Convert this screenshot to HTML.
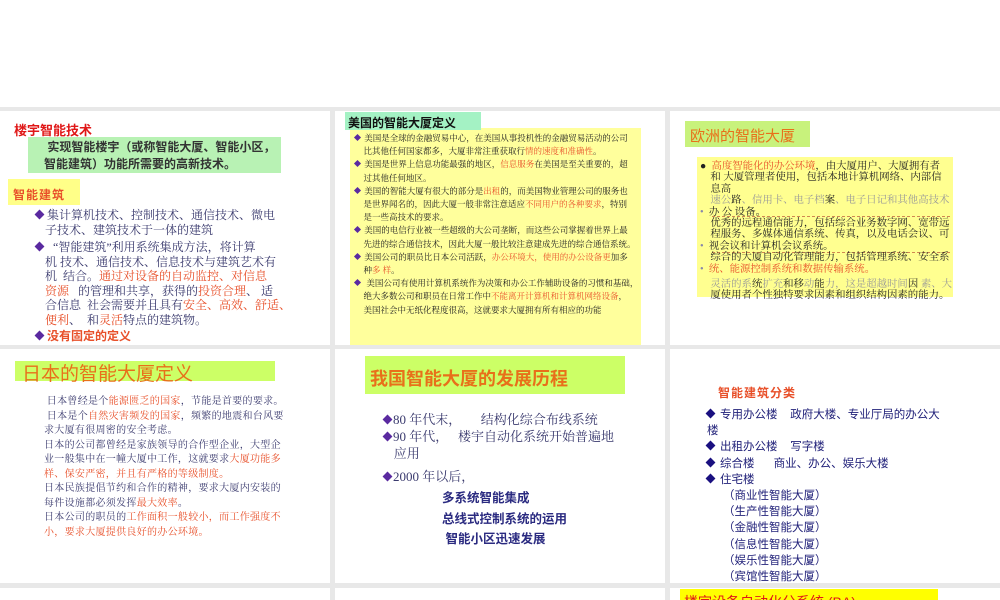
<!DOCTYPE html>
<html><head><meta charset="utf-8">
<style>
*{margin:0;padding:0;box-sizing:border-box}
body{width:1000px;height:600px;background:#e8e8e8;position:relative;overflow:hidden;font-family:"Liberation Sans","Noto Sans CJK SC",sans-serif}
.a{position:absolute}
.s{position:absolute;background:#fff}
.r{color:#e8502a}
.sr{font-family:"Liberation Serif","Noto Serif CJK SC",serif}
.nv{color:#3a3a6e}
.dm{display:inline-block;width:7px;height:7px;background:#5a2aa0;transform:rotate(45deg);margin-right:4px;vertical-align:1px}
.dm2{display:inline-block;width:7px;height:7px;background:#1a1080;transform:rotate(45deg);margin-right:6px;vertical-align:1px}
.dm3{display:inline-block;width:5px;height:5px;background:#5a2aa0;transform:rotate(45deg);vertical-align:1px}
</style></head><body>
<div class="s" style="left:0;top:0;width:1000px;height:107px"></div>

<!-- slide 1 -->
<div class="s" style="left:0;top:111px;width:330px;height:234px"></div>
<div class="a" style="left:14px;top:120px;font-size:13px;font-weight:bold;color:#e01818">楼宇智能技术</div>
<div class="a" style="left:28px;top:137px;width:253px;height:36px;background:#b8f2b4"></div>
<div class="a" style="left:44px;top:139px;font-size:12px;font-weight:bold;color:#333;line-height:17px">&nbsp;实现智能楼宇（或称智能大厦、智能小区，<br>智能建筑）功能所需要的高新技术。</div>
<div class="a" style="left:8px;top:179px;width:72px;height:26px;background:#ffff88"></div>
<div class="a" style="left:13px;top:186px;font-size:12px;font-weight:bold;color:#e8502a;letter-spacing:1px">智能建筑</div>
<div class="a sr nv" style="left:36px;top:208px;font-size:12px;line-height:14.5px;width:290px">
<div><span class="dm"></span>集计算机技术、控制技术、通信技术、微电<br>&nbsp;&nbsp;&nbsp;子技术、建筑技术于一体的建筑</div>
<div style="margin-top:3px"><span class="dm"></span>&nbsp;&nbsp;“智能建筑”利用系统集成方法，将计算<br>&nbsp;&nbsp;&nbsp;机 技术、通信技术、信息技术与建筑艺术有<br>&nbsp;&nbsp;&nbsp;机&nbsp;&nbsp;结合。<span class="r">通过对设备的自动监控、对信息</span><br>&nbsp;&nbsp;&nbsp;<span class="r">资源</span>&nbsp;&nbsp;&nbsp;的管理和共享，获得的<span class="r">投资合理</span>、&nbsp;适<br>&nbsp;&nbsp;&nbsp;合信息&nbsp;&nbsp;社会需要并且具有<span class="r">安全、高效、舒适、</span><br>&nbsp;&nbsp;&nbsp;<span class="r">便利</span>、&nbsp;&nbsp;和<span class="r">灵活</span>特点的建筑物。</div>
<div style="margin-top:2px;font-weight:bold;color:#e8502a;font-family:'Liberation Sans','Noto Sans CJK SC',sans-serif"><span class="dm"></span>没有固定的定义</div>
</div>

<!-- slide 2 -->
<div class="s" style="left:335px;top:111px;width:330px;height:234px"></div>
<div class="a" style="left:350px;top:128px;width:291px;height:217px;background:#ffff9c"></div>
<div class="a" style="left:345px;top:112px;width:136px;height:18px;background:#a4f2c4"></div>
<div class="a" style="left:348px;top:114px;font-size:12px;font-weight:bold;color:#111">美国的智能大厦定义</div>
<div class="a sr" style="left:355px;top:132px;font-size:8.5px;line-height:13.2px;color:#222;width:285px">
<div><span class="dm3"></span>&nbsp;&nbsp;美国是全球的金融贸易中心，在美国从事投机性的金融贸易活动的公司<br>&nbsp;&nbsp;&nbsp;&nbsp;比其他任何国家都多，大厦非常注重获取行<span class="r">情的速度和准确性</span>。</div>
<div><span class="dm3"></span>&nbsp;&nbsp;美国是世界上信息功能最强的地区，<span class="r">信息服务</span>在美国是至关重要的，超<br>&nbsp;&nbsp;&nbsp;&nbsp;过其他任何地区。</div>
<div><span class="dm3"></span>&nbsp;&nbsp;美国的智能大厦有很大的部分是<span class="r">出租</span>的，而美国物业管理公司的服务也<br>&nbsp;&nbsp;&nbsp;&nbsp;是世界闻名的，因此大厦一般非常注意适应<span class="r">不同用户的各种要求</span>，特别<br>&nbsp;&nbsp;&nbsp;&nbsp;是一些高技术的要求。</div>
<div><span class="dm3"></span>&nbsp;&nbsp;美国的电信行业被一些超级的大公司垄断，而这些公司掌握着世界上最<br>&nbsp;&nbsp;&nbsp;&nbsp;先进的综合通信技术，因此大厦一般比较注意建成先进的综合通信系统。</div>
<div><span class="dm3"></span>&nbsp;&nbsp;美国公司的职员比日本公司活跃，<span class="r">办公环境大，使用的办公设备更</span>加多<br>&nbsp;&nbsp;&nbsp;&nbsp;种<span class="r">多 样</span>。</div>
<div><span class="dm3"></span>&nbsp;&nbsp;&nbsp;美国公司有使用计算机系统作为决策和办公工作辅助设备的习惯和基础，<br>&nbsp;&nbsp;&nbsp;&nbsp;绝大多数公司和职员在日常工作中<span class="r">不能离开计算机和计算机网络设备</span>，<br>&nbsp;&nbsp;&nbsp;&nbsp;美国社会中无纸化程度很高，这就要求大厦拥有所有相应的功能</div>
</div>

<!-- slide 3 -->
<div class="s" style="left:670px;top:111px;width:330px;height:234px"></div>
<div class="a" style="left:685px;top:121px;width:125px;height:26px;background:#c8f27c"></div>
<div class="a" style="left:690px;top:125px;font-size:15px;color:#e8701a">欧洲的智能大厦</div>
<div class="a" style="left:697px;top:157px;width:256px;height:140px;background:#ffff90"></div>
<div class="a" style="left:712px;top:216px;width:238px;border-top:1px dashed #d08850"></div>
<div class="a" style="left:712px;top:252px;width:238px;border-top:1px dashed #d08850"></div>
<div class="a sr" style="left:700px;top:161px;font-size:10.4px;line-height:11.4px;color:#222;width:255px">
<div>●&nbsp;&nbsp;<span class="r">高度智能化的办公环境</span>，由大厦用户、大厦拥有者<br>&nbsp;&nbsp;&nbsp;&nbsp;和 大厦管理者使用，包括本地计算机网络、内部信<br>&nbsp;&nbsp;&nbsp;&nbsp;息高<br>&nbsp;&nbsp;&nbsp;&nbsp;<span style="color:#999">速公</span>路<span style="color:#999">、信用卡、电子档</span>案<span style="color:#999">、电子日记和其他高技术</span><br><span style="color:#88a">•</span>&nbsp;&nbsp;办 公 设备。</div>
<div>&nbsp;&nbsp;&nbsp;&nbsp;优秀的远程通信能力，包括综合业务数字网、宽带远<br>&nbsp;&nbsp;&nbsp;&nbsp;程服务、多媒体通信系统、传真，以及电话会议、可<br><span style="color:#88a">•</span>&nbsp;&nbsp;视会议和计算机会议系统。</div>
<div>&nbsp;&nbsp;&nbsp;&nbsp;综合的大厦自动化管理能力，包括管理系统、安全系<br><span style="color:#88a">•</span>&nbsp;&nbsp;<span class="r">统、能源控制系统和数据传输系统。</span></div>
<div style="margin-top:4px">&nbsp;&nbsp;&nbsp;&nbsp;<span style="color:#999">灵活的系</span>统<span style="color:#999">扩充</span>和移<span style="color:#999">动</span>能<span style="color:#999">力，这是超越时间</span>因&nbsp;<span style="color:#999">素、大</span><br>&nbsp;&nbsp;&nbsp;&nbsp;厦使用者个性独特要求因素和组织结构因素的能力。</div>
</div>

<!-- slide 4 -->
<div class="s" style="left:0;top:349px;width:330px;height:234px"></div>
<div class="a" style="left:15px;top:361px;width:260px;height:20px;background:#ccff66"></div>
<div class="a" style="left:22px;top:359px;font-size:19px;color:#e8701a">日本的智能大厦定义</div>
<div class="a sr nv" style="left:44px;top:395px;font-size:10px;line-height:14.5px;letter-spacing:0.3px;width:250px">
&nbsp;日本曾经是个<span class="r">能源匮乏的国家</span>，节能是首要的要求。<br>
&nbsp;日本是个<span class="r">自然灾害频发的国家</span>，频繁的地震和台风要<br>求大厦有很周密的安全考虑。<br>
日本的公司都曾经是家族领导的合作型企业，大型企<br>业一般集中在一幢大厦中工作，这就要求<span class="r">大厦功能多<br>样、保安严密，并且有严格的等级制度。</span><br>
日本民族提倡节约和合作的精神，要求大厦内安装的<br>每件设施都必须发挥<span class="r">最大效率</span>。<br>
日本公司的职员的<span class="r">工作面积一般较小，而工作强度不<br>小，要求大厦提供良好的办公环境。</span>
</div>

<!-- slide 5 -->
<div class="s" style="left:335px;top:349px;width:330px;height:234px"></div>
<div class="a" style="left:365px;top:356px;width:260px;height:38px;background:#ccff66"></div>
<div class="a" style="left:370px;top:365px;font-size:18px;font-weight:bold;color:#e8701a">我国智能大厦的发展历程</div>
<div class="a sr nv" style="left:384px;top:411px;font-size:13px;line-height:17px">
<div><span class="dm" style="margin-right:2px"></span>80 年代末，&nbsp;&nbsp;&nbsp;&nbsp;&nbsp;&nbsp;结构化综合布线系统</div>
<div><span class="dm" style="margin-right:2px"></span>90 年代，&nbsp;&nbsp;&nbsp;楼宇自动化系统开始普遍地<br>&nbsp;&nbsp;&nbsp;应用</div>
<div style="margin-top:6px"><span class="dm" style="margin-right:2px"></span>2000 年以后，</div>
</div>
<div class="a" style="left:442px;top:488px;font-size:12.5px;font-weight:bold;color:#2a2a80;line-height:20.5px">多系统智能集成<br>总线式控制系统的运用<br>&nbsp;智能小区迅速发展</div>

<!-- slide 6 -->
<div class="s" style="left:670px;top:349px;width:330px;height:234px"></div>
<div class="a" style="left:718px;top:384px;font-size:12px;color:#e8502a;font-weight:bold;letter-spacing:1px">智能建筑分类</div>
<div class="a" style="left:707px;top:407px;font-size:11.5px;line-height:16.2px;color:#22227a;width:250px">
<div><span class="dm2"></span>专用办公楼&nbsp;&nbsp;&nbsp;&nbsp;政府大楼、专业厅局的办公大<br>楼</div>
<div><span class="dm2"></span>出租办公楼&nbsp;&nbsp;&nbsp;&nbsp;写字楼</div>
<div><span class="dm2"></span>综合楼&nbsp;&nbsp;&nbsp;&nbsp;&nbsp;&nbsp;商业、办公、娱乐大楼</div>
<div><span class="dm2"></span>住宅楼</div>
<div style="padding-left:16px">（商业性智能大厦）<br>（生产性智能大厦）<br>（金融性智能大厦）<br>（信息性智能大厦）<br>（娱乐性智能大厦）<br>（宾馆性智能大厦）</div>
</div>

<!-- row 3 -->
<div class="s" style="left:0;top:588px;width:330px;height:12px"></div>
<div class="s" style="left:335px;top:588px;width:330px;height:12px"></div>
<div class="s" style="left:670px;top:588px;width:330px;height:12px"></div>
<div class="a" style="left:680px;top:589px;width:258px;height:11px;background:#ffff00;overflow:hidden"><div style="font-size:14px;color:#e01818;margin:3px 0 0 4px;white-space:nowrap">楼宇设备自动化分系统 (BA)</div></div>
</body></html>
